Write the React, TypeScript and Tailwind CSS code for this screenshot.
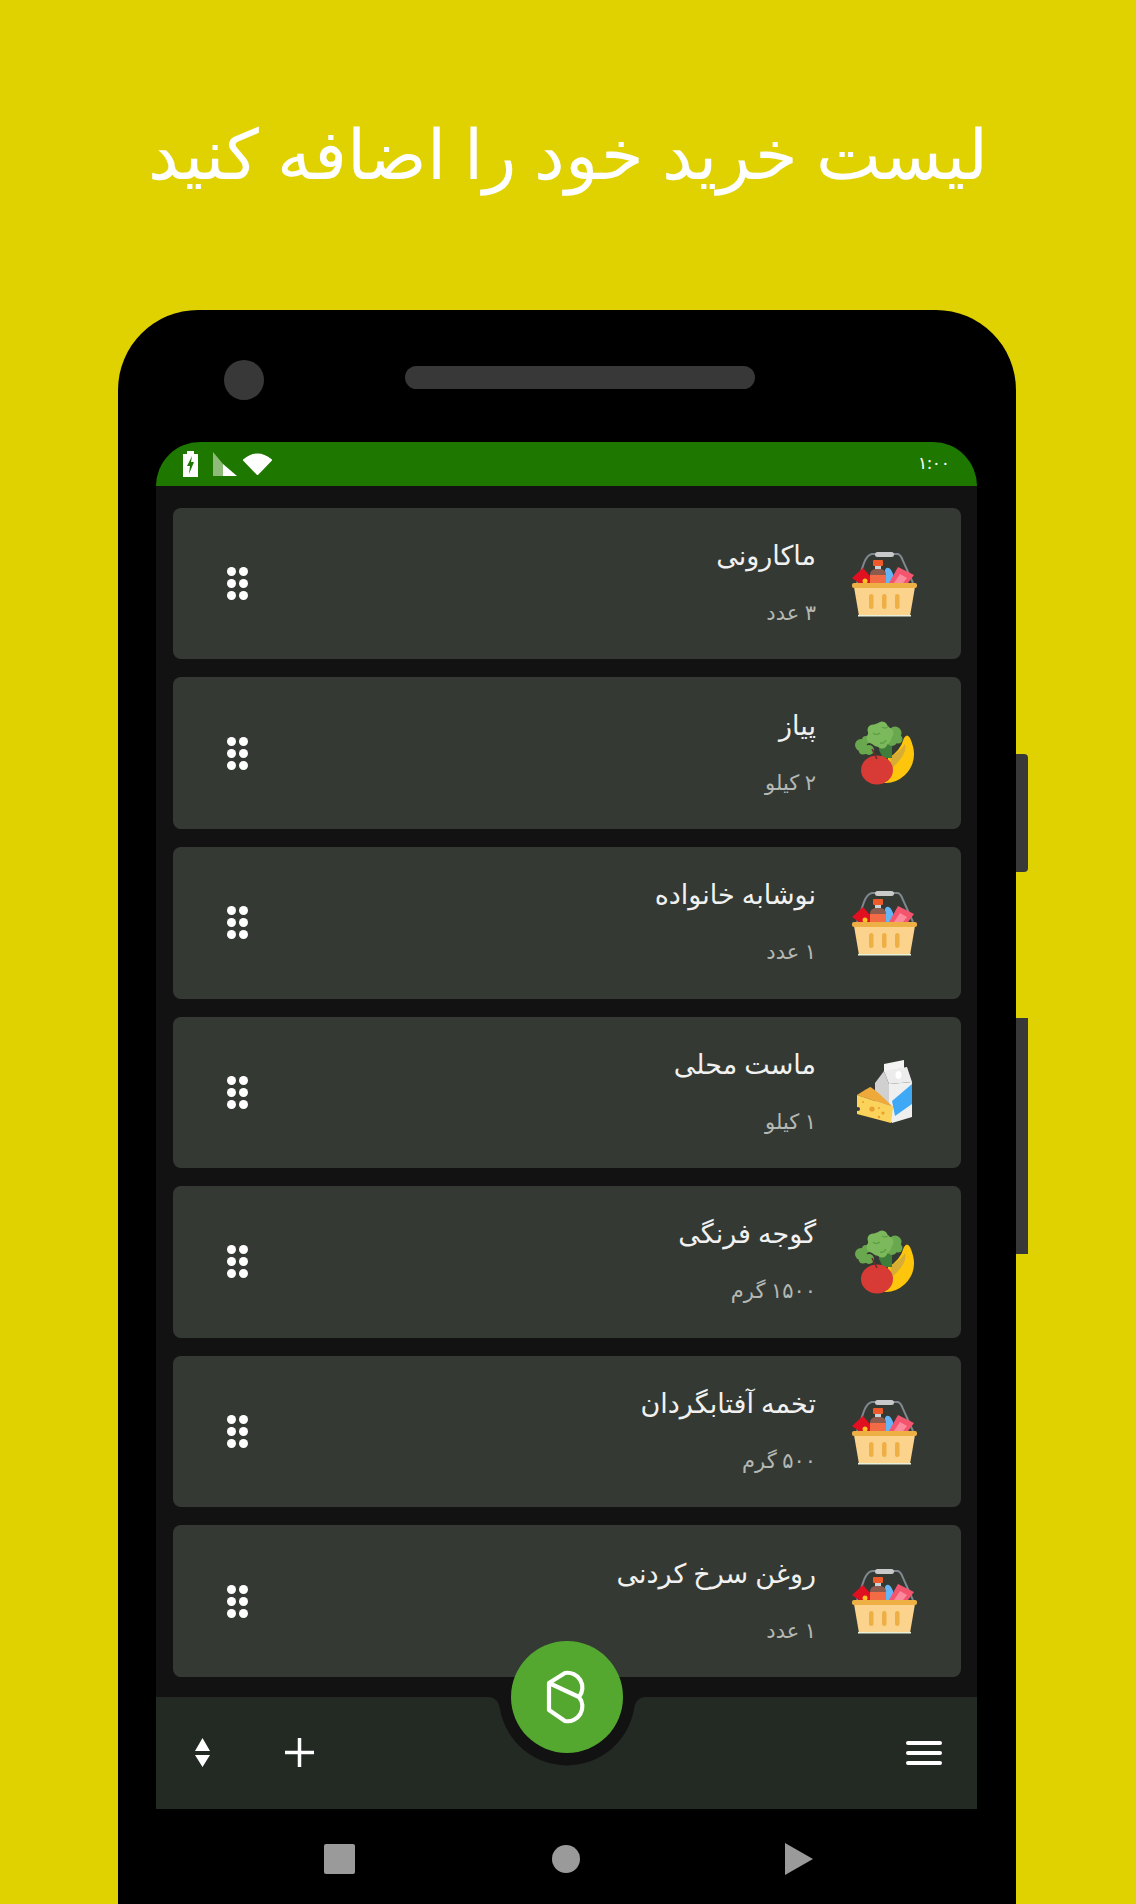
const items = [
  { name: "ماکارونی", qty: "۳ عدد", icon: "basket" },
  { name: "پیاز", qty: "۲ کیلو", icon: "produce" },
  { name: "نوشابه خانواده", qty: "۱ عدد", icon: "basket" },
  { name: "ماست محلی", qty: "۱ کیلو", icon: "dairy" },
  { name: "گوجه فرنگی", qty: "۱۵۰۰ گرم", icon: "produce" },
  { name: "تخمه آفتابگردان", qty: "۵۰۰ گرم", icon: "basket" },
  { name: "روغن سرخ کردنی", qty: "۱ عدد", icon: "basket" },
];

function BasketIcon() {
  return (
    <svg width="110" height="100" viewBox="0 0 110 100" className="-mt-[6px] shrink-0">
      <path d="M37 52 L44 32 Q47 24 52 23 L56 23 M73 23 L78 23 Q81 24 83 30 L93 52" fill="none" stroke="#7f8790" strokeWidth="2" />
      <rect x="55" y="21" width="19" height="5" rx="2.5" fill="#c9c9c9" />
      <path d="M32 47 L43 37 L50 45 L50 52 L39 52 Z" fill="#e01020" />
      <circle cx="45" cy="50" r="2.5" fill="#f7c325" />
      <path d="M65 52 L65 39 Q66 36 69 37 Q73 39 75 52 Z" fill="#64b5f6" />
      <rect x="53" y="29" width="10" height="6" rx="1" fill="#ef5a2a" />
      <rect x="55" y="35" width="6" height="3" fill="#c7d3d6" />
      <path d="M50 44 Q50 39 55 38 L61 38 Q66 39 66 44 Z" fill="#8d5a4e" />
      <rect x="50" y="44" width="16" height="8" fill="#f26b45" />
      <path d="M69 52 L78 36 L94 44 L88 52 Z" fill="#f4546e" />
      <path d="M74 52 L80 43 L87 47 L83 52 Z" fill="#fb8b9c" />
      <path d="M34 56 L95 56 L90 85 L39 85 Z" fill="#fcd38c" />
      <rect x="38" y="84" width="53" height="1.5" fill="#e8f0d8" />
      <rect x="32" y="52" width="65" height="5" rx="2" fill="#eeb045" />
      <rect x="49" y="63" width="4.5" height="15" rx="2.2" fill="#eeb045" />
      <rect x="62" y="63" width="4.5" height="15" rx="2.2" fill="#eeb045" />
      <rect x="75" y="63" width="4.5" height="15" rx="2.2" fill="#eeb045" />
    </svg>
  );
}

function ProduceIcon() {
  return (
    <svg width="110" height="100" viewBox="0 0 110 100" className="-mt-[6px] shrink-0">
      <path d="M84 38 Q87 33 90 38 Q100 60 85 75 Q75 84 64 83 L68 58 Q80 52 84 38 Z" fill="#fdc50b" />
      <path d="M70 57 Q80 52 85 44 Q88 54 72 68 Z" fill="#d8ad35" />
      <path d="M59 50 L63 58 L72 58 L72 44 L60 42 Z" fill="#3f7d3a" />
      <circle cx="41" cy="45" r="6" fill="#6aa84f" />
      <circle cx="46" cy="40" r="4" fill="#6aa84f" />
      <circle cx="49" cy="50" r="5" fill="#6aa84f" />
      <circle cx="43" cy="50" r="4.5" fill="#6aa84f" />
      <circle cx="75" cy="33" r="6.5" fill="#6aa84f" />
      <circle cx="78" cy="39" r="4.5" fill="#6aa84f" />
      <circle cx="72" cy="41" r="5" fill="#6aa84f" />
      <circle cx="60" cy="35" r="12" fill="#7cb95c" />
      <circle cx="53" cy="30" r="5.5" fill="#7cb95c" />
      <circle cx="62" cy="27" r="5.5" fill="#7cb95c" />
      <circle cx="68" cy="33" r="5.5" fill="#7cb95c" />
      <circle cx="52" cy="38" r="5.5" fill="#7cb95c" />
      <circle cx="62" cy="43" r="5.5" fill="#7cb95c" />
      <path d="M53 33 Q56 36 60 33 M60 43 Q64 44 66 40 M62 27 Q65 29 68 27" fill="none" stroke="#5f9f45" strokeWidth="1.5" />
      <ellipse cx="57" cy="70" rx="16" ry="14.5" fill="#d83a35" />
      <path d="M52 49 L57 59" stroke="#6b2f2a" strokeWidth="1.6" />
    </svg>
  );
}

function DairyIcon() {
  return (
    <svg width="110" height="100" viewBox="0 0 110 100" className="-mt-[6px] shrink-0">
      <path d="M64 25 L84 21 L84 29 L64 33 Z" fill="#f4f4f4" />
      <path d="M64 32 L87 28 L92 43 L69 45 Z" fill="#ececec" />
      <ellipse cx="78.5" cy="36" rx="3" ry="4" fill="#ffffff" />
      <path d="M55 44 L64 32 L69 45 L69 72 L55 62 Z" fill="#d0d0d0" />
      <path d="M69 45 L92 43 L92 78 L72 84 L69 80 Z" fill="#efefef" />
      <path d="M72 62 L92 45 L92 65 L75 77 Z" fill="#3fa9f5" />
      <path d="M37 56 Q48 49 50 48 Q54 49 73 68 Z" fill="#eea93a" />
      <path d="M37 56 L73 68 L72 76 L71 84 L37 75 Z" fill="#fbd25a" />
      <circle cx="52" cy="70" r="2.6" fill="#e8a030" />
      <circle cx="63" cy="74" r="1.6" fill="#e8a030" />
      <circle cx="59" cy="78" r="1.2" fill="#e8a030" />
      <circle cx="43" cy="63" r="1" fill="#e8a030" />
      <circle cx="59" cy="69" r="1" fill="#e8a030" />
      <circle cx="38" cy="70" r="2" fill="#343a33" />
    </svg>
  );
}

function DragDots() {
  return (
    <div className="grid grid-cols-2 gap-[3px] ml-[54px]">
      {[0, 1, 2, 3, 4, 5].map((i) => (
        <span key={i} className="w-[9px] h-[9px] rounded-full bg-white" />
      ))}
    </div>
  );
}

function ItemCard({ item }: { item: (typeof items)[number] }) {
  return (
    <div className="flex items-center justify-between h-[151.6px] rounded-lg bg-[#343a33] pr-[31px]">
      <DragDots />
      <div className="flex items-center">
        <div className="flex flex-col items-start mt-[6px]" dir="rtl">
          <p className="text-[27px] leading-[38px] text-[#f1f1f1] -mt-[10px]">{item.name}</p>
          <p className="text-[21px] leading-[30px] text-[#b5b8b4] mt-[23px]">{item.qty}</p>
        </div>
        <div className="w-[4px]" />
        {item.icon === "basket" && <BasketIcon />}
        {item.icon === "produce" && <ProduceIcon />}
        {item.icon === "dairy" && <DairyIcon />}
      </div>
    </div>
  );
}

function StatusBar() {
  return (
    <div className="flex items-center justify-between h-[44px] bg-[#1e7800] rounded-t-[50px] pl-[27px] pr-[27px]">
      <div className="flex items-center gap-[5px]">
        <svg width="15" height="26" viewBox="0 0 15 26">
          <path d="M4 0 H11 V3 H15 V26 H0 V3 H4 Z" fill="#fff" />
          <path d="M9 5 L4 15 H7 L6 23 L11 11 H8 Z" fill="#1e7800" />
        </svg>
        <svg width="24" height="24" viewBox="0 0 24 24" className="ml-[10px]">
          <path d="M0 0 L10 12 V24 H0 Z" fill="#8fbb7a" />
          <path d="M10 12 L24 24 H10 Z" fill="#fff" />
        </svg>
        <svg width="31" height="24" viewBox="0 0 31 24">
          <path d="M2 8 Q15.5 -3 29 8 L15.5 22 Z" fill="#fff" stroke="#fff" strokeWidth="2" strokeLinejoin="round" />
        </svg>
      </div>
      <span className="text-[17px] text-white leading-none -mt-[4px]">۱:۰۰</span>
    </div>
  );
}

function BottomBar() {
  return (
    <div className="relative flex items-center justify-between h-[112px] bg-[#232923] pl-[39px] pr-[35px]">
      <div className="flex items-center gap-[75px]">
        <svg width="15" height="29" viewBox="0 0 15 29">
          <path d="M7.5 0 L15 13 H0 Z M0 17 H15 L7.5 29 Z" fill="#fff" />
        </svg>
        <svg width="29" height="29" viewBox="0 0 29 29">
          <path d="M14.5 0 V29 M0 14.5 H29" stroke="#fff" strokeWidth="3.5" />
        </svg>
      </div>
      <div className="flex flex-col gap-[6px]">
        <span className="w-[36px] h-[4px] rounded-sm bg-white" />
        <span className="w-[36px] h-[4px] rounded-sm bg-white" />
        <span className="w-[36px] h-[4px] rounded-sm bg-white" />
      </div>
      <svg width="180" height="70" viewBox="0 0 180 70" className="absolute left-[321px] top-0">
        <path d="M0 0 H11 Q21 0 23 12 A68 68 0 0 0 157 12 Q159 0 169 0 H180 Z" fill="#121212" />
      </svg>
      <div className="absolute left-[355px] -top-[56px] w-[112px] h-[112px] rounded-full bg-[#55a82f]">
        <svg width="112" height="112" viewBox="0 0 112 112">
          <path
            d="M38 42 V69 L54 80 A14.8 14.8 0 0 0 68 56 L38 42 L54 32 A14.8 14.8 0 0 1 68 56"
            fill="none"
            stroke="#fff"
            strokeWidth="4.2"
            strokeLinejoin="round"
          />
        </svg>
      </div>
    </div>
  );
}

export default function App() {
  return (
    <div className="h-[1904px] overflow-hidden bg-[#e0d100] font-['Noto_Sans','DejaVu_Sans',sans-serif]">
      <div className="h-[310px] flex justify-center pt-[114px]">
        <h1 className="text-[69px] leading-[76px] text-white font-light whitespace-nowrap" dir="rtl">
          لیست خرید خود را اضافه کنید
        </h1>
      </div>
      <div className="relative ml-[118px] w-[898px] h-[1594px] bg-black rounded-t-[80px] px-[38px]">
        <span className="absolute -right-[12px] top-[444px] w-[12px] h-[118px] bg-[#383838] rounded-r-[4px]" />
        <span className="absolute -right-[12px] top-[708px] w-[12px] h-[236px] bg-[#383838]" />
        <div className="flex items-center h-[132px]">
          <span className="ml-[68px] w-[40px] h-[40px] rounded-full bg-[#383838] mt-[8px]" />
          <span className="ml-[141px] w-[350px] h-[23px] rounded-[12px] bg-[#383838] mt-[3px]" />
        </div>
        <div className="w-[821px]">
          <StatusBar />
          <div className="flex flex-col gap-[18px] bg-[#121212] pt-[21.8px] pb-[19.8px] pl-[17px] pr-[16px]">
            {items.map((item, i) => (
              <ItemCard key={i} item={item} />
            ))}
          </div>
          <BottomBar />
        </div>
        <div className="flex items-center h-[95px] pt-[6px]">
          <span className="ml-[168px] w-[31px] h-[30px] rounded-[2px] bg-[#9a9a9a]" />
          <span className="ml-[197px] w-[28px] h-[28px] rounded-full bg-[#9a9a9a]" />
          <svg width="28" height="32" viewBox="0 0 28 32" className="ml-[205px]">
            <path d="M0 0 L28 16 L0 32 Z" fill="#9a9a9a" />
          </svg>
        </div>
      </div>
    </div>
  );
}
